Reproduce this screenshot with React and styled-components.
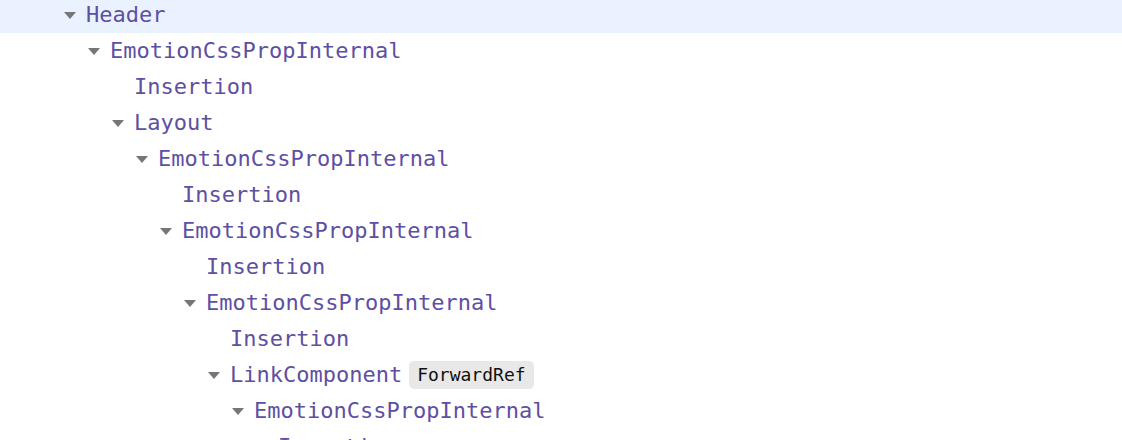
import React from 'react'
import styled, { createGlobalStyle } from 'styled-components'

const GlobalStyle = createGlobalStyle`
  html, body {
    margin: 0;
    padding: 0;
    background: #ffffff;
    overflow: hidden;
  }
  body {
    font-family: "DejaVu Sans Mono", "Liberation Mono", monospace;
  }
`

let tree = [
  { name: 'Header', depth: 0, open: true, selected: true },
  { name: 'EmotionCssPropInternal', depth: 1, open: true },
  { name: 'Insertion', depth: 2 },
  { name: 'Layout', depth: 2, open: true },
  { name: 'EmotionCssPropInternal', depth: 3, open: true },
  { name: 'Insertion', depth: 4 },
  { name: 'EmotionCssPropInternal', depth: 4, open: true },
  { name: 'Insertion', depth: 5 },
  { name: 'EmotionCssPropInternal', depth: 5, open: true },
  { name: 'Insertion', depth: 6 },
  { name: 'LinkComponent', depth: 6, open: true, badge: 'ForwardRef' },
  { name: 'EmotionCssPropInternal', depth: 7, open: true },
  { name: 'Insertion', depth: 8 },
]

function App() {
  return (
    <>
      <GlobalStyle />
      <Tree>
        {tree.map((node, i) => (
          <Row key={i} $depth={node.depth} $selected={node.selected}>
            <Toggle>{node.open ? <Caret /> : null}</Toggle>
            <Name>{node.name}</Name>
            {node.badge ? <Badge>{node.badge}</Badge> : null}
          </Row>
        ))}
      </Tree>
    </>
  )
}

const Tree = styled.div`
  width: 100%;
  height: 443px;
  margin-top: -3px;
  overflow: hidden;
`

const Row = styled.div`
  display: flex;
  align-items: center;
  height: 36px;
  padding-left: ${(p) => 62 + p.$depth * 24}px;
  background: ${(p) => (p.$selected ? '#e9f2fe' : 'transparent')};
  white-space: nowrap;
`

const Toggle = styled.span`
  width: 24px;
  height: 36px;
  display: flex;
  align-items: center;
  padding-left: 2px;
  box-sizing: border-box;
  flex-shrink: 0;
`

const Caret = styled.span`
  display: block;
  width: 0;
  height: 0;
  border-left: 6.5px solid transparent;
  border-right: 6.5px solid transparent;
  border-top: 7px solid #767676;
  margin-top: 1px;
`

const Name = styled.span`
  font-size: 22px;
  line-height: 36px;
  color: #5e4fa2;
`

const Badge = styled.span`
  margin-left: 7px;
  padding: 0 8px;
  height: 28px;
  line-height: 28px;
  border-radius: 5px;
  background: #e8e8e8;
  color: #111111;
  font-size: 18px;
`

export default App
